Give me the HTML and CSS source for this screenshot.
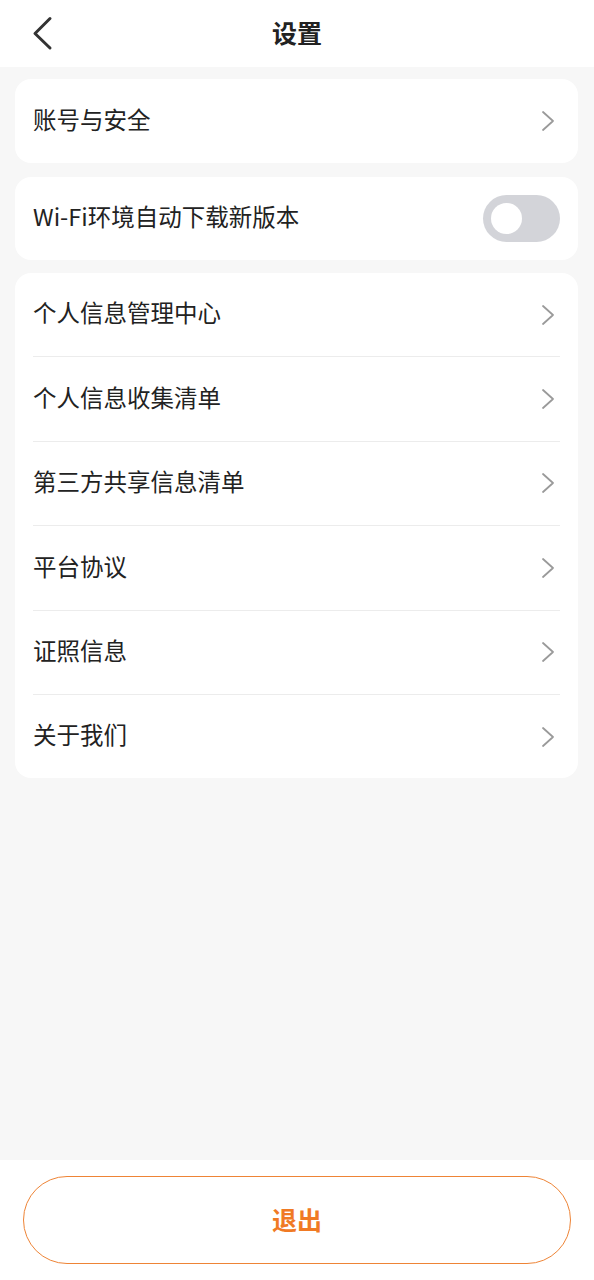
FILE: index.html
```html
<!DOCTYPE html>
<html lang="zh-CN">
<head>
<meta charset="utf-8">
<title>设置</title>
<link rel="stylesheet" href="styles.css">
</head>
<body>
<div class="page">
  <header class="topbar">
    <div class="back">
      <svg width="30" height="40" viewBox="0 0 30 40"><polyline points="26,4.5 11,19.5 26,34" fill="none" stroke="#333" stroke-width="3" stroke-linecap="round" stroke-linejoin="round"/></svg>
    </div>
    <h1 class="title">设置</h1>
    <div class="spacer"></div>
  </header>
  <main class="content">
    <section class="card">
      <div class="row"><span class="label">账号与安全</span><svg class="chev" width="20" height="24" viewBox="0 0 20 24"><polyline points="3,3 13,12 3,21" fill="none" stroke="#9a9a9a" stroke-width="1.8" stroke-linecap="round" stroke-linejoin="round"/></svg></div>
    </section>
    <section class="card card-toggle">
      <div class="row row-short"><span class="label">Wi-Fi环境自动下载新版本</span><div class="switch"><div class="knob"></div></div></div>
    </section>
    <section class="card list">
      <div class="row"><span class="label">个人信息管理中心</span><svg class="chev" width="20" height="24" viewBox="0 0 20 24"><polyline points="3,3 13,12 3,21" fill="none" stroke="#9a9a9a" stroke-width="1.8" stroke-linecap="round" stroke-linejoin="round"/></svg></div>
      <div class="row"><span class="label">个人信息收集清单</span><svg class="chev" width="20" height="24" viewBox="0 0 20 24"><polyline points="3,3 13,12 3,21" fill="none" stroke="#9a9a9a" stroke-width="1.8" stroke-linecap="round" stroke-linejoin="round"/></svg></div>
      <div class="row"><span class="label">第三方共享信息清单</span><svg class="chev" width="20" height="24" viewBox="0 0 20 24"><polyline points="3,3 13,12 3,21" fill="none" stroke="#9a9a9a" stroke-width="1.8" stroke-linecap="round" stroke-linejoin="round"/></svg></div>
      <div class="row"><span class="label">平台协议</span><svg class="chev" width="20" height="24" viewBox="0 0 20 24"><polyline points="3,3 13,12 3,21" fill="none" stroke="#9a9a9a" stroke-width="1.8" stroke-linecap="round" stroke-linejoin="round"/></svg></div>
      <div class="row"><span class="label">证照信息</span><svg class="chev" width="20" height="24" viewBox="0 0 20 24"><polyline points="3,3 13,12 3,21" fill="none" stroke="#9a9a9a" stroke-width="1.8" stroke-linecap="round" stroke-linejoin="round"/></svg></div>
      <div class="row"><span class="label">关于我们</span><svg class="chev" width="20" height="24" viewBox="0 0 20 24"><polyline points="3,3 13,12 3,21" fill="none" stroke="#9a9a9a" stroke-width="1.8" stroke-linecap="round" stroke-linejoin="round"/></svg></div>
    </section>
  </main>
  <footer class="bottombar">
    <button class="logout">退出</button>
  </footer>
</div>
</body>
</html>
```

FILE: styles.css
```css
html, body {
  margin: 0;
  padding: 0;
}
body {
  font-family: "Noto Sans CJK SC", "Noto Sans", sans-serif;
  background: #f7f7f7;
  color: #222;
}
.page {
  width: 594px;
  height: 1280px;
  display: flex;
  flex-direction: column;
}
.topbar {
  height: 67px;
  flex: none;
  background: #fff;
  display: flex;
  align-items: center;
}
.back {
  width: 80px;
  padding-left: 24px;
  box-sizing: border-box;
  display: flex;
  align-items: center;
}
.back svg {
  display: block;
}
.title {
  flex: 1;
  margin: 0;
  padding-bottom: 2px;
  text-align: center;
  font-size: 25px;
  font-weight: 700;
  color: #222;
  line-height: 1;
}
.spacer {
  width: 80px;
}
.content {
  flex: 1;
  padding: 12px 16px 0 15px;
  display: flex;
  flex-direction: column;
}
.card {
  background: #fff;
  border-radius: 16px;
  padding: 0 18px;
}
.card-toggle {
  margin-top: 14px;
}
.list {
  margin-top: 13px;
}
.row {
  height: 84px;
  display: flex;
  align-items: center;
  justify-content: space-between;
}
.row-short {
  height: 83px;
}
.list .row {
  height: 83.4px;
}
.list .row + .row {
  border-top: 1px solid #ececec;
}
.label {
  font-size: 23.5px;
  line-height: 1;
  padding-bottom: 3px;
  color: #222;
}
.chev {
  display: block;
  flex: none;
}
.switch {
  width: 77px;
  height: 47px;
  border-radius: 24px;
  background: #d3d4d9;
  display: flex;
  align-items: center;
  padding-left: 8px;
  box-sizing: border-box;
}
.knob {
  width: 31px;
  height: 31px;
  border-radius: 50%;
  background: #fff;
}
.bottombar {
  height: 120px;
  flex: none;
  background: #fff;
  padding: 16px 23px 0 23px;
  box-sizing: border-box;
}
.logout {
  width: 548px;
  height: 88px;
  border: 1.5px solid #ee8436;
  border-radius: 44px;
  background: #fff;
  color: #f07a24;
  font-family: "Noto Sans CJK SC", "Noto Sans", sans-serif;
  font-size: 25px;
  font-weight: 700;
  padding-bottom: 3px;
  display: block;
}
```
